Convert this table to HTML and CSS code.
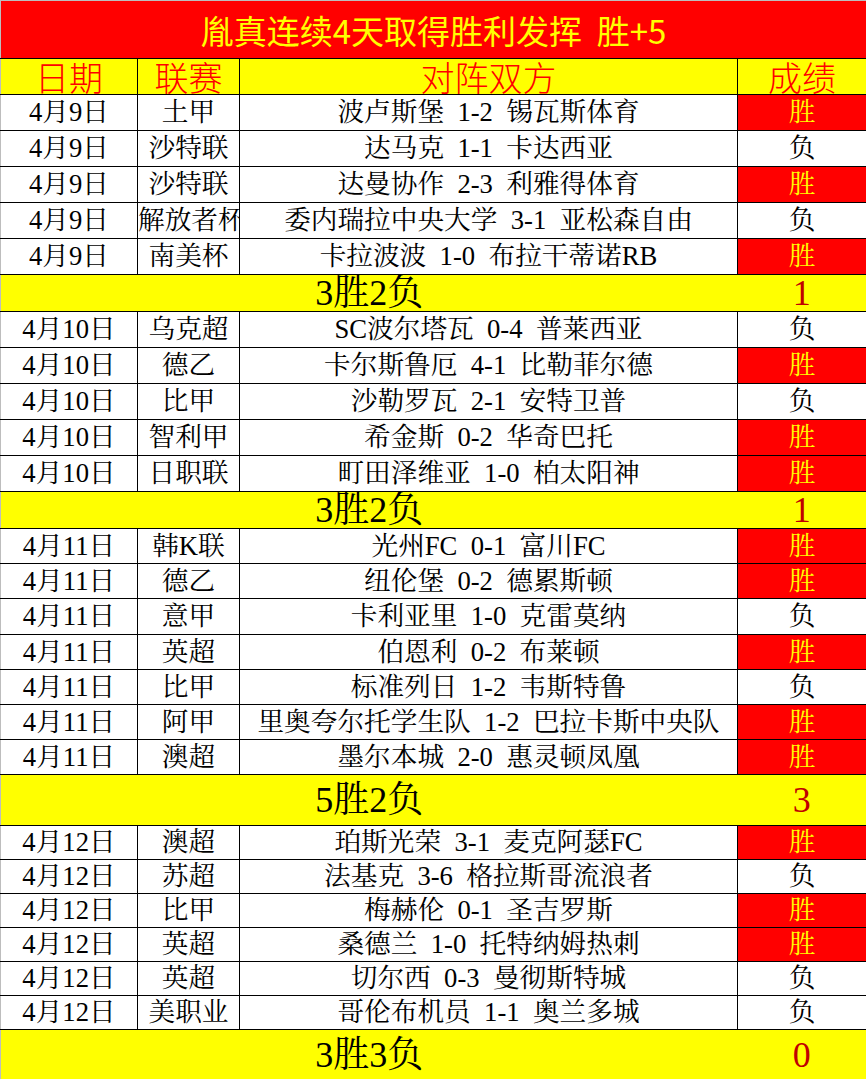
FILE: index.html
```html
<!DOCTYPE html>
<html lang="zh-CN">
<head>
<meta charset="utf-8">
<title>胤真连续4天取得胜利发挥</title>
<link rel="stylesheet" href="styles.css">
</head>
<body>
<table class="sheet">
  <colgroup>
    <col class="c-date"><col class="c-league"><col class="c-match"><col class="c-res">
  </colgroup>
  <tbody>
    <tr class="title-row"><td colspan="4" class="title">胤真连续4天取得胜利发挥&nbsp;&nbsp;胜+5</td></tr>
    <tr class="head-row"><td>日期</td><td>联赛</td><td>对阵双方</td><td>成绩</td></tr>

    <tr class="r36"><td>4月9日</td><td>土甲</td><td class="m">波卢斯堡 1-2 锡瓦斯体育</td><td class="win">胜</td></tr>
    <tr class="r36"><td>4月9日</td><td>沙特联</td><td class="m">达马克 1-1 卡达西亚</td><td class="lose">负</td></tr>
    <tr class="r36"><td>4月9日</td><td>沙特联</td><td class="m">达曼协作 2-3 利雅得体育</td><td class="win">胜</td></tr>
    <tr class="r36"><td>4月9日</td><td>解放者杯</td><td class="m">委内瑞拉中央大学 3-1 亚松森自由</td><td class="lose">负</td></tr>
    <tr class="r36"><td>4月9日</td><td>南美杯</td><td class="m">卡拉波波 1-0 布拉干蒂诺RB</td><td class="win">胜</td></tr>
    <tr class="sum r36"><td colspan="3" class="sum-text">3胜2负</td><td class="sum-num">1</td></tr>

    <tr class="r36"><td>4月10日</td><td>乌克超</td><td class="m">SC波尔塔瓦 0-4 普莱西亚</td><td class="lose">负</td></tr>
    <tr class="r36"><td>4月10日</td><td>德乙</td><td class="m">卡尔斯鲁厄 4-1 比勒菲尔德</td><td class="win">胜</td></tr>
    <tr class="r36"><td>4月10日</td><td>比甲</td><td class="m">沙勒罗瓦 2-1 安特卫普</td><td class="lose">负</td></tr>
    <tr class="r36"><td>4月10日</td><td>智利甲</td><td class="m">希金斯 0-2 华奇巴托</td><td class="win">胜</td></tr>
    <tr class="r36"><td>4月10日</td><td>日职联</td><td class="m">町田泽维亚 1-0 柏太阳神</td><td class="win">胜</td></tr>
    <tr class="sum r36"><td colspan="3" class="sum-text">3胜2负</td><td class="sum-num">1</td></tr>

    <tr class="r35"><td>4月11日</td><td>韩K联</td><td class="m">光州FC 0-1 富川FC</td><td class="win">胜</td></tr>
    <tr class="r35"><td>4月11日</td><td>德乙</td><td class="m">纽伦堡 0-2 德累斯顿</td><td class="win">胜</td></tr>
    <tr class="r36"><td>4月11日</td><td>意甲</td><td class="m">卡利亚里 1-0 克雷莫纳</td><td class="lose">负</td></tr>
    <tr class="r35"><td>4月11日</td><td>英超</td><td class="m">伯恩利 0-2 布莱顿</td><td class="win">胜</td></tr>
    <tr class="r35"><td>4月11日</td><td>比甲</td><td class="m">标准列日 1-2 韦斯特鲁</td><td class="lose">负</td></tr>
    <tr class="r35"><td>4月11日</td><td>阿甲</td><td class="m">里奥夸尔托学生队 1-2 巴拉卡斯中央队</td><td class="win">胜</td></tr>
    <tr class="r35"><td>4月11日</td><td>澳超</td><td class="m">墨尔本城 2-0 惠灵顿凤凰</td><td class="win">胜</td></tr>
    <tr class="sum r51"><td colspan="3" class="sum-text">5胜2负</td><td class="sum-num">3</td></tr>

    <tr class="r34"><td>4月12日</td><td>澳超</td><td class="m">珀斯光荣 3-1 麦克阿瑟FC</td><td class="win">胜</td></tr>
    <tr class="r34"><td>4月12日</td><td>苏超</td><td class="m">法基克 3-6 格拉斯哥流浪者</td><td class="lose">负</td></tr>
    <tr class="r34"><td>4月12日</td><td>比甲</td><td class="m">梅赫伦 0-1 圣吉罗斯</td><td class="win">胜</td></tr>
    <tr class="r34"><td>4月12日</td><td>英超</td><td class="m">桑德兰 1-0 托特纳姆热刺</td><td class="win">胜</td></tr>
    <tr class="r34"><td>4月12日</td><td>英超</td><td class="m">切尔西 0-3 曼彻斯特城</td><td class="lose">负</td></tr>
    <tr class="r34"><td>4月12日</td><td>美职业</td><td class="m">哥伦布机员 1-1 奥兰多城</td><td class="lose">负</td></tr>
    <tr class="sum r51"><td colspan="3" class="sum-text">3胜3负</td><td class="sum-num">0</td></tr>
  </tbody>
</table>
</body>
</html>
```

FILE: styles.css
```css
html, body {
  margin: 0;
  padding: 0;
  background: #ffffff;
}

.sheet {
  width: 866px;
  table-layout: fixed;
  border-collapse: collapse;
  font-family: "Liberation Serif", "Noto Serif CJK SC", "Noto Sans CJK SC", serif;
  font-size: 26.67px;
  line-height: 1;
  color: #000000;
  border-top: 1px solid #bdbdbd;
  border-left: 1px solid #bdbdbd;
}

.c-date { width: 137px; }
.c-league { width: 102px; }
.c-match { width: 498px; }
.c-res { width: 129px; }

.sheet td {
  border: 1px solid #000000;
  padding: 0;
  text-align: center;
  vertical-align: middle;
  white-space: nowrap;
  overflow: hidden;
}

.sheet tr > td:first-child {
  border-left: 1px solid #bdbdbd;
}

.title-row { height: 58px; }
.title-row .title {
  background: #ff0000;
  color: #ffff00;
  font-family: "Noto Sans CJK SC", sans-serif;
  font-size: 33px;
  padding-top: 2px;
  border-top: 1px solid #bdbdbd;
}

.head-row { height: 36px; }
.head-row td {
  background: #ffff00;
  color: #ff0000;
  font-family: "Noto Sans CJK SC", sans-serif;
  font-weight: 300;
  font-size: 34px;
  line-height: 32px;
}

.r36 { height: 36px; }
.r35 { height: 35px; }
.r34 { height: 34px; }
.r51 { height: 51px; }

.m {
  word-spacing: 0.25em;
}

.sheet td.win {
  background: #ff0000;
  color: #ffff00;
}

.sheet td.lose {
  background: #ffffff;
  color: #000000;
}

.sum td {
  background: #ffff00;
  font-size: 36px;
}

.sheet td.sum-text {
  color: #000000;
  border-right: none;
}

.sheet td.sum-num {
  color: #c00000;
  border-left: none;
}
```
